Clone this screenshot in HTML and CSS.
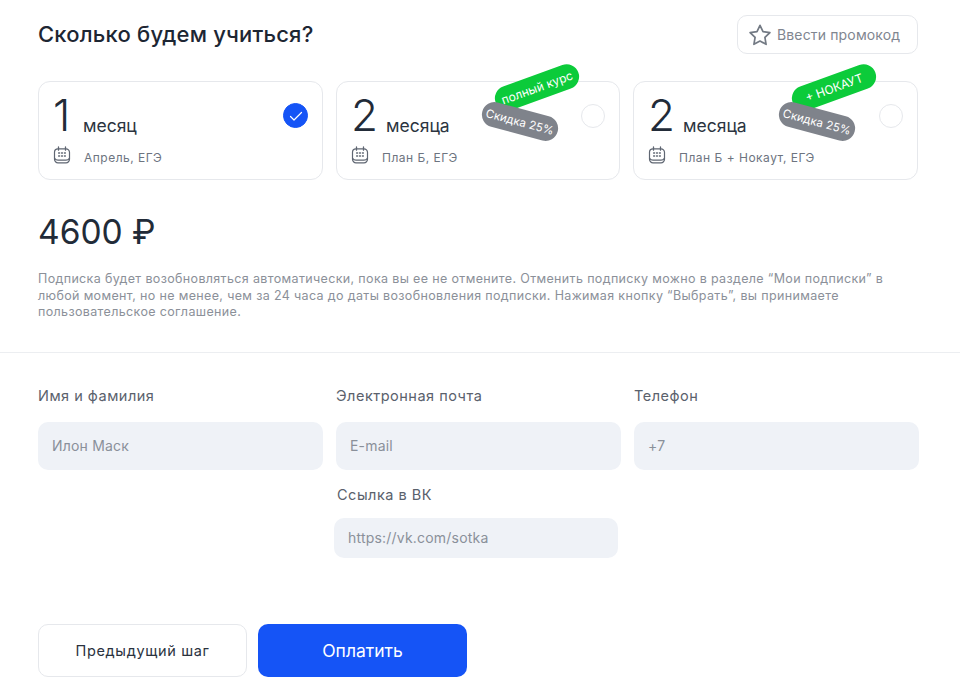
FILE: index.html
```html
<!DOCTYPE html>
<html lang="ru">
<head>
<meta charset="utf-8">
<title>Сколько будем учиться?</title>
<link rel="stylesheet" href="styles.css">
</head>
<body>
<svg class="defs" width="0" height="0" aria-hidden="true">
  <symbol id="cal" viewBox="0 0 18 18">
    <path d="M5.500 1v3.200M12.500 1v3.200" fill="none" stroke="currentColor" stroke-width="1.300" stroke-linecap="round"/>
    <path d="M5 2.800h8a3.500 3.500 0 0 1 3.500 3.500v7a3.500 3.500 0 0 1-3.500 3.500H5a3.500 3.500 0 0 1-3.500-3.500v-7A3.500 3.500 0 0 1 5 2.800z" fill="none" stroke="currentColor" stroke-width="1.200"/>
    <path d="M1.600 12.400c.8 1.200 2 1.800 3.400 1.800h8c1.400 0 2.600-.6 3.400-1.800" fill="none" stroke="currentColor" stroke-width="1.200"/>
    <path d="M5.600 7h1M8.500 7h1M11.400 7h1M5.600 10h1M8.500 10h1M11.400 10h1" fill="none" stroke="currentColor" stroke-width="1.300" stroke-linecap="round"/>
  </symbol>
</svg>
<main class="page">
  <header class="top">
    <h1 class="title">Сколько будем учиться?</h1>
    <button class="promo" type="button">
      <svg class="star" viewBox="0 0 24 24" width="24" height="24"><path d="M12 2.300l3 6.300 6.900 1-5 4.800 1.200 6.900-6.100-3.300-6.100 3.300 1.200-6.900-5-4.800 6.900-1z" fill="none" stroke="currentColor" stroke-width="1.700" stroke-linejoin="round"/></svg>
      Ввести промокод
    </button>
  </header>

  <section class="plans">
    <article class="plan">
      <div class="amount"><span class="num">1</span><span class="unit">месяц</span></div>
      <div class="desc"><svg class="cal"><use href="#cal"/></svg><span>Апрель, ЕГЭ</span></div>
      <span class="radio radio-on"><svg viewBox="0 0 16 16" width="16" height="16"><path d="M2.500 8.500l3.500 3.500 7.500-7.500" fill="none" stroke="#fff" stroke-width="1.200" stroke-linecap="round" stroke-linejoin="round"/></svg></span>
    </article>
    <article class="plan">
      <div class="amount"><span class="num">2</span><span class="unit">месяца</span></div>
      <div class="desc"><svg class="cal"><use href="#cal"/></svg><span>План Б, ЕГЭ</span></div>
      <span class="radio radio-off"></span>
      <span class="tag tag-green">полный курс</span>
      <span class="tag tag-grey">Скидка 25%</span>
    </article>
    <article class="plan">
      <div class="amount"><span class="num">2</span><span class="unit">месяца</span></div>
      <div class="desc"><svg class="cal"><use href="#cal"/></svg><span>План Б + Нокаут, ЕГЭ</span></div>
      <span class="radio radio-off"></span>
      <span class="tag tag-green">+ НОКАУТ</span>
      <span class="tag tag-grey">Скидка 25%</span>
    </article>
  </section>

  <div class="price">4600 ₽</div>
  <p class="note">Подписка будет возобновляться автоматически, пока вы ее не отмените. Отменить подписку можно в разделе “Мои подписки” в любой момент, но не менее, чем за 24 часа до даты возобновления подписки. Нажимая кнопку “Выбрать”, вы принимаете пользовательское соглашение.</p>

  <hr class="rule">

  <form class="fields">
    <label class="field"><span class="label">Имя и фамилия</span><input class="input" placeholder="Илон Маск"></label>
    <label class="field"><span class="label">Электронная почта</span><input class="input" placeholder="E-mail"></label>
    <label class="field"><span class="label">Телефон</span><input class="input" placeholder="+7"></label>
    <label class="field field-vk"><span class="label label-vk">Ссылка в ВК</span><input class="input input-vk" placeholder="https://vk.com/sotka"></label>
  </form>

  <div class="actions">
    <button class="btn btn-back" type="button">Предыдущий шаг</button>
    <button class="btn btn-pay" type="button">Оплатить</button>
  </div>
</main>
</body>
</html>
```
FILE: styles.css
```css
* { box-sizing: border-box; }
html, body { margin: 0; padding: 0; background: #fff; }
body { font-family: Inter, "Noto Sans", sans-serif; color: #222b38; height: 693px; overflow: hidden; }
.defs { position: absolute; }
.page { padding: 15px 0 0; }
.top { display: flex; justify-content: space-between; align-items: flex-start; padding: 0 42px 0 38px; height: 66px; }
.title { margin: 6px 0 0; font-size: 22px; line-height: 26px; font-weight: 450; color: #1d2633; letter-spacing: .2px; }
.promo { display: flex; align-items: center; gap: 5px; width: 181px; height: 39px; padding: 0 0 0 10px; background: #fff; border: 1px solid #e6e8ec; border-radius: 10px; font: 400 14px Inter, sans-serif; color: #7f8690; letter-spacing: .15px; }
.star { color: #737a84; flex: none; }
.plans { display: grid; grid-template-columns: 285px 284px 285px; gap: 13px; padding-left: 38px; }
.plan { position: relative; height: 99px; border: 1px solid #e6e8ec; border-radius: 12px; padding: 10px 14px 0; }
.amount { display: flex; align-items: baseline; height: 46px; }
.num { min-width: 22px; font-size: 44px; line-height: 46px; font-weight: 300; color: #222b38; margin-right: 8px; }
.unit { font-size: 17.500px; color: #2b3440; position: relative; top: 1px; }
.desc { display: flex; align-items: center; gap: 13px; margin-top: 10px; font-size: 12px; letter-spacing: .5px; color: #6d7480; }
.cal { width: 18px; height: 18px; color: #5f6672; flex: none; position: relative; top: -2px; }
.radio { position: absolute; right: 14px; top: 21px; width: 25px; height: 25px; border-radius: 50%; border: 1px solid #e6e8ec; display: flex; align-items: center; justify-content: center; }
.radio-off { width: 24px; height: 24px; top: 22px; }
.radio-on { background: #1554f6; border-color: #1554f6; }
.tag { position: absolute; display: flex; align-items: center; justify-content: center; height: 25px; border-radius: 13px; color: #fff; white-space: nowrap; }
.tag-green { font-size: 12px; background: #0ccb3a; width: 88px; left: 156px; top: -7px; transform: rotate(-20deg); }
.tag-grey { font-size: 11.500px; background: #7f838b; width: 78px; left: 144px; top: 27px; transform: rotate(15deg); }
.price { margin: 32px 0 0 38px; font-size: 33.500px; line-height: 40px; font-weight: 400; color: #222b38; }
.note { margin: 19px 0 0 38px; width: 860px; font-size: 12.500px; line-height: 16.500px; color: #8b9099; letter-spacing: .35px; }
.rule { margin: 31px 0 0; border: 0; border-top: 1px solid #eceef1; }
.fields { display: grid; grid-template-columns: 285px 285px 285px; column-gap: 13px; padding: 34px 0 0 38px; }
.field { display: flex; flex-direction: column; }
.label { font-size: 14.500px; line-height: 18px; color: #5a616c; letter-spacing: .5px; }
.label-vk { margin-left: 1px; }
.input { margin-top: 17px; height: 48px; width: 100%; border: 0; border-radius: 10px; background: #eff2f7; padding: 0 14px; font: 400 14px Inter, sans-serif; outline: none; }
.input::placeholder { color: #8a909a; opacity: 1; letter-spacing: .2px; }
.field-vk { grid-column: 2; margin-top: 16px; }
.input-vk { margin: 14px 0 0 -2px; height: 40px; width: 284px; }
.actions { display: flex; gap: 11px; margin-top: 66px; padding-left: 38px; }
.btn { height: 53px; width: 209px; border-radius: 10px; font-family: Inter, sans-serif; }
.btn-back { background: #fff; border: 1px solid #e6e8ec; color: #2a323e; font-size: 14.500px; font-weight: 400; letter-spacing: .65px; }
.btn-pay { background: #1554f6; border: 0; color: #fff; font-size: 17.500px; font-weight: 400; }
```
